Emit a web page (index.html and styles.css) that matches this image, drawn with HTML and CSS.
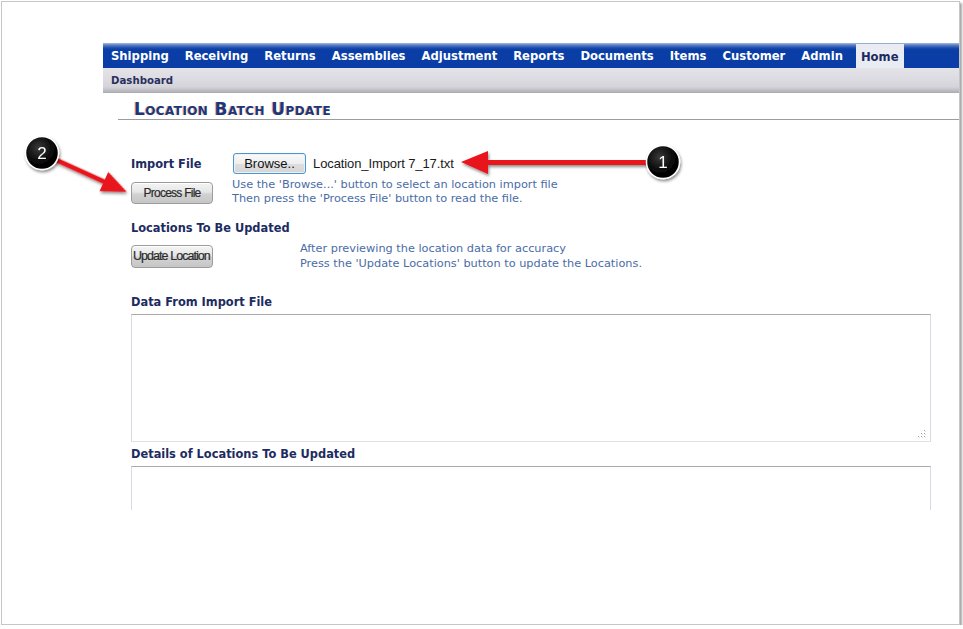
FILE: index.html
```html
<!DOCTYPE html>
<html>
<head>
<meta charset="utf-8">
<link rel="stylesheet" href="styles.css">
</head>
<body>
<div class="frame">
  <div class="app">
    <nav class="topnav">
      <span class="nav-item">Shipping</span>
      <span class="nav-item">Receiving</span>
      <span class="nav-item">Returns</span>
      <span class="nav-item">Assemblies</span>
      <span class="nav-item">Adjustment</span>
      <span class="nav-item">Reports</span>
      <span class="nav-item">Documents</span>
      <span class="nav-item">Items</span>
      <span class="nav-item">Customer</span>
      <span class="nav-item">Admin</span>
      <span class="nav-item nav-active">Home</span>
    </nav>
    <div class="subnav"><span class="sub-item">Dashboard</span></div>
    <div class="viewport">
      <h1 class="title">Location Batch Update</h1>
      <div class="form">
        <div class="grid-import">
          <div class="label">Import File</div>
          <div class="file-row">
            <div class="btn-browse">Browse..</div>
            <span class="filename">Location_Import 7_17.txt</span>
          </div>
          <div class="btn-gray btn-process">Process File</div>
          <div class="help">Use the 'Browse...' button to select an location import file<br>Then press the 'Process File' button to read the file.</div>
        </div>
        <div class="label section">Locations To Be Updated</div>
        <div class="grid-update">
          <div class="btn-gray btn-update">Update Location</div>
          <div class="help help-wide">After previewing the location data for accuracy<br>Press the 'Update Locations' button to update the Locations.</div>
        </div>
        <div class="label section-data">Data From Import File</div>
        <div class="box box-data">
          <svg class="grip" width="10" height="10" viewBox="0 0 10 10">
            <rect x="7" y="1" width="1" height="1" fill="#a0a0a0"/>
            <rect x="4" y="4" width="1" height="1" fill="#a0a0a0"/>
            <rect x="7" y="4" width="1" height="1" fill="#a0a0a0"/>
            <rect x="1" y="7" width="1" height="1" fill="#a0a0a0"/>
            <rect x="4" y="7" width="1" height="1" fill="#a0a0a0"/>
            <rect x="7" y="7" width="1" height="1" fill="#a0a0a0"/>
            <rect x="8" y="2" width="1" height="1" fill="#e0e0e0"/>
            <rect x="5" y="5" width="1" height="1" fill="#e0e0e0"/>
            <rect x="8" y="5" width="1" height="1" fill="#e0e0e0"/>
            <rect x="2" y="8" width="1" height="1" fill="#e0e0e0"/>
            <rect x="5" y="8" width="1" height="1" fill="#e0e0e0"/>
            <rect x="8" y="8" width="1" height="1" fill="#e0e0e0"/>
          </svg>
        </div>
        <div class="label section-details">Details of Locations To Be Updated</div>
        <div class="box box-details"></div>
      </div>
    </div>
  </div>
</div>
<svg class="annot" width="963" height="629" viewBox="0 0 963 629">
  <defs>
    <filter id="sh" x="-20%" y="-20%" width="140%" height="160%">
      <feDropShadow dx="1" dy="2" stdDeviation="1.5" flood-color="#000" flood-opacity="0.45"/>
    </filter>
    <radialGradient id="ball" cx="40%" cy="35%" r="70%">
      <stop offset="0" stop-color="#3a3a3a"/>
      <stop offset="0.6" stop-color="#080808"/>
      <stop offset="1" stop-color="#000"/>
    </radialGradient>
  </defs>
  <g filter="url(#sh)">
    <path d="M461 162 L488 151 L488 160 L650 160 L650 165 L488 165 L488 174 Z" fill="#e8141c"/>
    <g transform="translate(52 158) rotate(24.4)">
      <path d="M0 -2.2 L57 -2.2 L57 -10.5 L82 0 L57 10.5 L57 2.2 L0 2.2 Z" fill="#e8141c"/>
    </g>
  </g>
  <g filter="url(#sh)">
    <circle cx="663" cy="162" r="16.5" fill="url(#ball)" stroke="#fff" stroke-width="1.5"/>
    <circle cx="42" cy="153" r="16.5" fill="url(#ball)" stroke="#fff" stroke-width="1.5"/>
  </g>
  <text x="663" y="168" class="num">1</text>
  <text x="42" y="159" class="num">2</text>
</svg>
</body>
</html>
```

FILE: styles.css
```css
html, body {
  margin: 0;
  padding: 0;
  background: #ffffff;
}

.frame {
  position: relative;
  margin: 1px 0 0 1px;
  width: 957px;
  height: 622px;
  border: 1px solid #c6c6c6;
  box-shadow: 2px 2px 2px rgba(0, 0, 0, 0.35);
  background: #ffffff;
  overflow: hidden;
}

.app {
  margin-left: 101px;
  padding-top: 41px;
}

.topnav {
  display: flex;
  height: 25px;
  background: linear-gradient(to bottom, #a9bde0 0px, #5f80c4 2px, #1a4aad 5px, #0a3ea6 7px, #0a3ea6 100%);
  font-family: "DejaVu Sans", Verdana, sans-serif;
  font-weight: bold;
  font-size: 11.6px;
}

.nav-item {
  color: #ffffff;
  padding: 2px 8px 0 8px;
  line-height: 23px;
  white-space: nowrap;
}

.nav-active {
  margin-left: 5px;
  padding: 2px 5px 0 5px;
  background: #e9ecf3;
  color: #1c2b61;
  margin-top: 1px;
  line-height: 22px;
}

.subnav {
  height: 25px;
  background: linear-gradient(to bottom, #e3e3e8 0%, #dcdce2 40%, #d4d4da 75%, #b9b9c0 92%, #a9a9b0 100%);
  font-family: "DejaVu Sans", Verdana, sans-serif;
  font-weight: bold;
  font-size: 10.2px;
  line-height: 25px;
}

.sub-item {
  display: inline-block;
  padding-left: 8px;
  color: #2a2f5e;
}

.viewport {
  height: 417px;
  overflow: hidden;
  padding-left: 15px;
}

.title {
  margin: 0;
  padding: 7px 0 0 16px;
  line-height: 19px;
  height: 19px;
  border-bottom: 1px solid #9c9c9c;
  font-family: "DejaVu Sans", Verdana, sans-serif;
  font-size: 17px;
  letter-spacing: 0.4px;
  font-weight: bold;
  font-variant: small-caps;
  color: #1d3778;
  text-shadow: -1px 0 0 rgba(205, 110, 80, 0.55);
}

.form {
  padding: 33px 27px 0 13px;
  font-family: "DejaVu Sans", Verdana, sans-serif;
}

.label {
  font-size: 11.4px;
  font-weight: bold;
  color: #1c2b61;
  line-height: 14px;
}

.grid-import {
  display: grid;
  grid-template-columns: 101px 1fr;
  row-gap: 4px;
  align-items: center;
}

.file-row {
  display: flex;
  align-items: center;
  gap: 7px;
}

.btn-browse {
  box-sizing: border-box;
  margin-left: 1px;
  width: 73px;
  height: 21px;
  border: 1px solid #4f94cd;
  border-radius: 3px;
  background: linear-gradient(to bottom, #fbfbfb 0%, #eeeeee 50%, #dedede 51%, #d6d6d6 100%);
  box-shadow: inset 0 0 0 1px #e8f2fb;
  font-family: "Liberation Sans", Arial, sans-serif;
  font-size: 13px;
  line-height: 19px;
  text-align: center;
  color: #111111;
}

.filename {
  font-family: "Liberation Sans", Arial, sans-serif;
  font-size: 13px;
  color: #1a1a1a;
  letter-spacing: -0.1px;
}

.btn-gray {
  box-sizing: border-box;
  width: 82px;
  border: 1px solid #9c9c9c;
  border-radius: 4px;
  background: linear-gradient(to bottom, #f4f4f4 0%, #e6e6e6 45%, #d2d2d2 55%, #c6c6c6 100%);
  box-shadow: inset 0 1px 0 #ffffff;
  font-family: "Liberation Sans", Arial, sans-serif;
  font-size: 12px;
  letter-spacing: -0.75px;
  color: #2a2a2a;
  white-space: nowrap;
  overflow: hidden;
  -webkit-text-stroke: 0.2px #2a2a2a;
}

.btn-process {
  height: 22px;
  line-height: 20px;
  text-align: center;
  align-self: start;
  margin-top: 4px;
}

.help {
  font-size: 11.3px;
  line-height: 14px;
  color: #4a6ca6;
  align-self: start;
}

.section {
  margin-top: 15px;
}

.grid-update {
  display: grid;
  grid-template-columns: 169px 1fr;
  margin-top: 6px;
}

.btn-update {
  height: 23px;
  line-height: 21px;
  margin-top: 4px;
  padding-left: 1px;
  text-align: left;
  font-size: 12.5px;
  letter-spacing: -0.95px;
}

.help-wide {
  line-height: 15px;
}

.section-data {
  margin-top: 24px;
}

.section-details {
  margin-top: 5px;
}

.box {
  position: relative;
  box-sizing: border-box;
  width: 800px;
  margin-top: 5px;
  border: 1px solid #d6dbe3;
  border-top-color: #a9a9a9;
  border-bottom-color: #e2e2e2;
  background: #ffffff;
}

.box-data {
  height: 128px;
}

.box-details {
  height: 80px;
}

.grip {
  position: absolute;
  right: 3px;
  bottom: 2px;
}

.annot {
  position: absolute;
  left: 0;
  top: 0;
  pointer-events: none;
}

.num {
  font-family: "Liberation Sans", Arial, sans-serif;
  font-size: 17px;
  fill: #ffffff;
  text-anchor: middle;
}
```
